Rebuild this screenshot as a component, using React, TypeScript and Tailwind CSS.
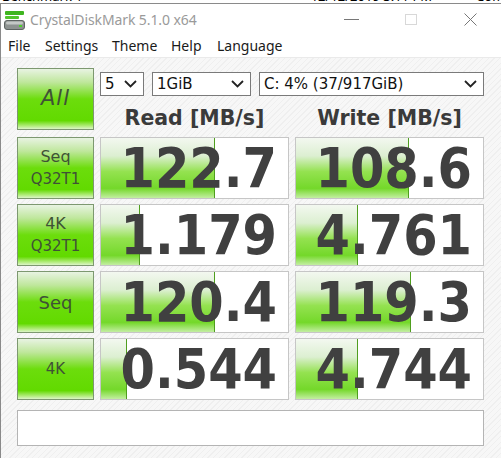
import React from "react";

const rows = [
  { l1: "Seq", l2: "Q32T1", r: "122.7", rw: 114, w: "108.6", ww: 113 },
  { l1: "4K", l2: "Q32T1", r: "1.179", rw: 39, w: "4.761", ww: 62 },
  { l1: "Seq", l2: "", r: "120.4", rw: 114, w: "119.3", ww: 115 },
  { l1: "4K", l2: "", r: "0.544", rw: 26, w: "4.744", ww: 62 },
];

const btn =
  "border border-[#7d9870] bg-[linear-gradient(to_bottom,#e8f3e2_0%,#bfe79c_22%,#6cdd0c_50%,#62da00_86%,#b2ec7c_95%,#dcf5c8_100%)] flex flex-col items-center justify-center text-[#3f5236]";

function Chevron() {
  return (
    <svg width="13" height="8" viewBox="0 0 13 8" className="shrink-0">
      <polyline points="1,1 6.5,6.5 12,1" fill="none" stroke="#222" strokeWidth="1.8" />
    </svg>
  );
}

function Select({ w, text }: { w: string; text: string }) {
  return (
    <div className={`${w} h-[24px] border border-[#7a7a7a] bg-white flex items-center justify-between pl-[4px] pr-[6px] text-[15px] text-[#111]`}>
      <span className="leading-none">{text}</span>
      <Chevron />
    </div>
  );
}

function Cell({ value, fill }: { value: string; fill: number }) {
  return (
    <div className="relative h-[62px] border border-[#c6c6c6] bg-white overflow-hidden">
      <div
        className="absolute left-0 top-0 bottom-0 border-r border-[#4f9e1e] bg-[linear-gradient(to_bottom,#f3f8f0_0%,#dcefd1_30%,#94e250_56%,#74d82a_84%,#c3eea2_100%)]"
        style={{ width: fill }}
      />
      <div className="relative h-full flex items-center justify-end pr-[11px] text-[55px] font-bold text-[#404040] leading-none font-['DejaVu_Sans_Condensed','DejaVu_Sans',sans-serif]">
        {value}
      </div>
    </div>
  );
}

export default function App() {
  return (
    <div className="w-[501px] h-[458px] overflow-hidden bg-white relative font-['DejaVu_Sans',sans-serif]">
      <div className="h-[3px] overflow-hidden relative text-[13px] leading-[13px] text-black font-['Noto_Sans',sans-serif]">
        <div className="flex mt-[-10px] whitespace-nowrap">
          <span className="ml-[2px]">Benchmark 1</span>
          <span className="ml-[228px]">12/12/2019 3:11 PM</span>
          <span className="ml-[44px]">Command</span>
        </div>
      </div>
      <div className="h-[455px] border-l border-t border-[#8a8a8a] flex flex-col">
        <div className="h-[30px] flex items-center shrink-0 bg-white">
          <svg width="21" height="20" viewBox="0 0 21 20" className="ml-[3px] mt-[2px]">
            <rect x="1" y="1" width="19" height="4" rx="1" fill="#3fb51f" />
            <rect x="1" y="6" width="14" height="3" rx="1" fill="#52c52c" />
            <rect x="0.5" y="10.5" width="20" height="9" rx="2.5" fill="#8d9290" stroke="#5e6462" />
            <rect x="2" y="11.5" width="17" height="3" rx="1.5" fill="#c4c8c6" />
            <rect x="15" y="15" width="3" height="2" fill="#4cd02a" />
          </svg>
          <span className="ml-[5px] text-[14px] text-[#9a9a9a] font-['Noto_Sans',sans-serif] tracking-[-0.1px]">
            CrystalDiskMark 5.1.0 x64
          </span>
          <div className="ml-auto flex items-center">
            <div className="w-[15px] h-[1px] bg-[#777] mr-[46px]" />
            <div className="w-[12px] h-[11px] border border-[#d8d8d8] mr-[47px]" />
            <svg width="13" height="13" viewBox="0 0 13 13" className="mr-[24px]">
              <line x1="0.5" y1="0.5" x2="12.5" y2="12.5" stroke="#777" strokeWidth="1" />
              <line x1="12.5" y1="0.5" x2="0.5" y2="12.5" stroke="#777" strokeWidth="1" />
            </svg>
          </div>
        </div>
        <div className="h-[24px] flex items-center shrink-0 bg-white border-b border-[#eaeaea] text-[14px] text-[#1a1a1a] font-['Noto_Sans',sans-serif] pl-[7px]">
          <span className="w-[37px]">File</span>
          <span className="w-[67px]">Settings</span>
          <span className="w-[59px]">Theme</span>
          <span className="w-[46px]">Help</span>
          <span>Language</span>
        </div>
        <div className="flex-1 pl-[16px] pt-[10px] bg-[repeating-linear-gradient(-45deg,#f7f7f7_0px,#f7f7f7_3px,#efefef_3px,#efefef_4px)]">
          <div className="grid grid-cols-[77px_189px_189px] gap-x-[6px]">
            <div className={`${btn} h-[62px]`}>
              <span className="text-[21px] italic tracking-[1px]">All</span>
            </div>
            <div className="col-span-2 h-[62px] flex flex-col pt-[4px]">
              <div className="flex gap-[8px]">
                <Select w="w-[44px]" text="5" />
                <Select w="w-[99px]" text="1GiB" />
                <Select w="w-[225px]" text="C: 4% (37/917GiB)" />
              </div>
              <div className="grid grid-cols-2 gap-x-[6px] pt-[10px] text-[20.5px] font-bold text-[#3a3a3a] leading-[24px]">
                <div className="text-center">Read [MB/s]</div>
                <div className="text-center">Write [MB/s]</div>
              </div>
            </div>
          </div>
          <div className="flex flex-col gap-[5px] mt-[7px]">
            {rows.map((row, i) => (
              <div key={i} className="grid grid-cols-[77px_189px_189px] gap-x-[6px]">
                <div className={`${btn} h-[62px]`}>
                  {row.l2 ? (
                    <>
                      <span className="text-[16px] leading-[22px]">{row.l1}</span>
                      <span className="text-[15px] leading-[22px]">{row.l2}</span>
                    </>
                  ) : (
                    <span className={row.l1 === "Seq" ? "text-[18px]" : "text-[15px]"}>{row.l1}</span>
                  )}
                </div>
                <Cell value={row.r} fill={row.rw} />
                <Cell value={row.w} fill={row.ww} />
              </div>
            ))}
          </div>
          <div className="mt-[10px] w-[467px] h-[36px] border border-[#b4b4b4] bg-white" />
        </div>
      </div>
    </div>
  );
}
